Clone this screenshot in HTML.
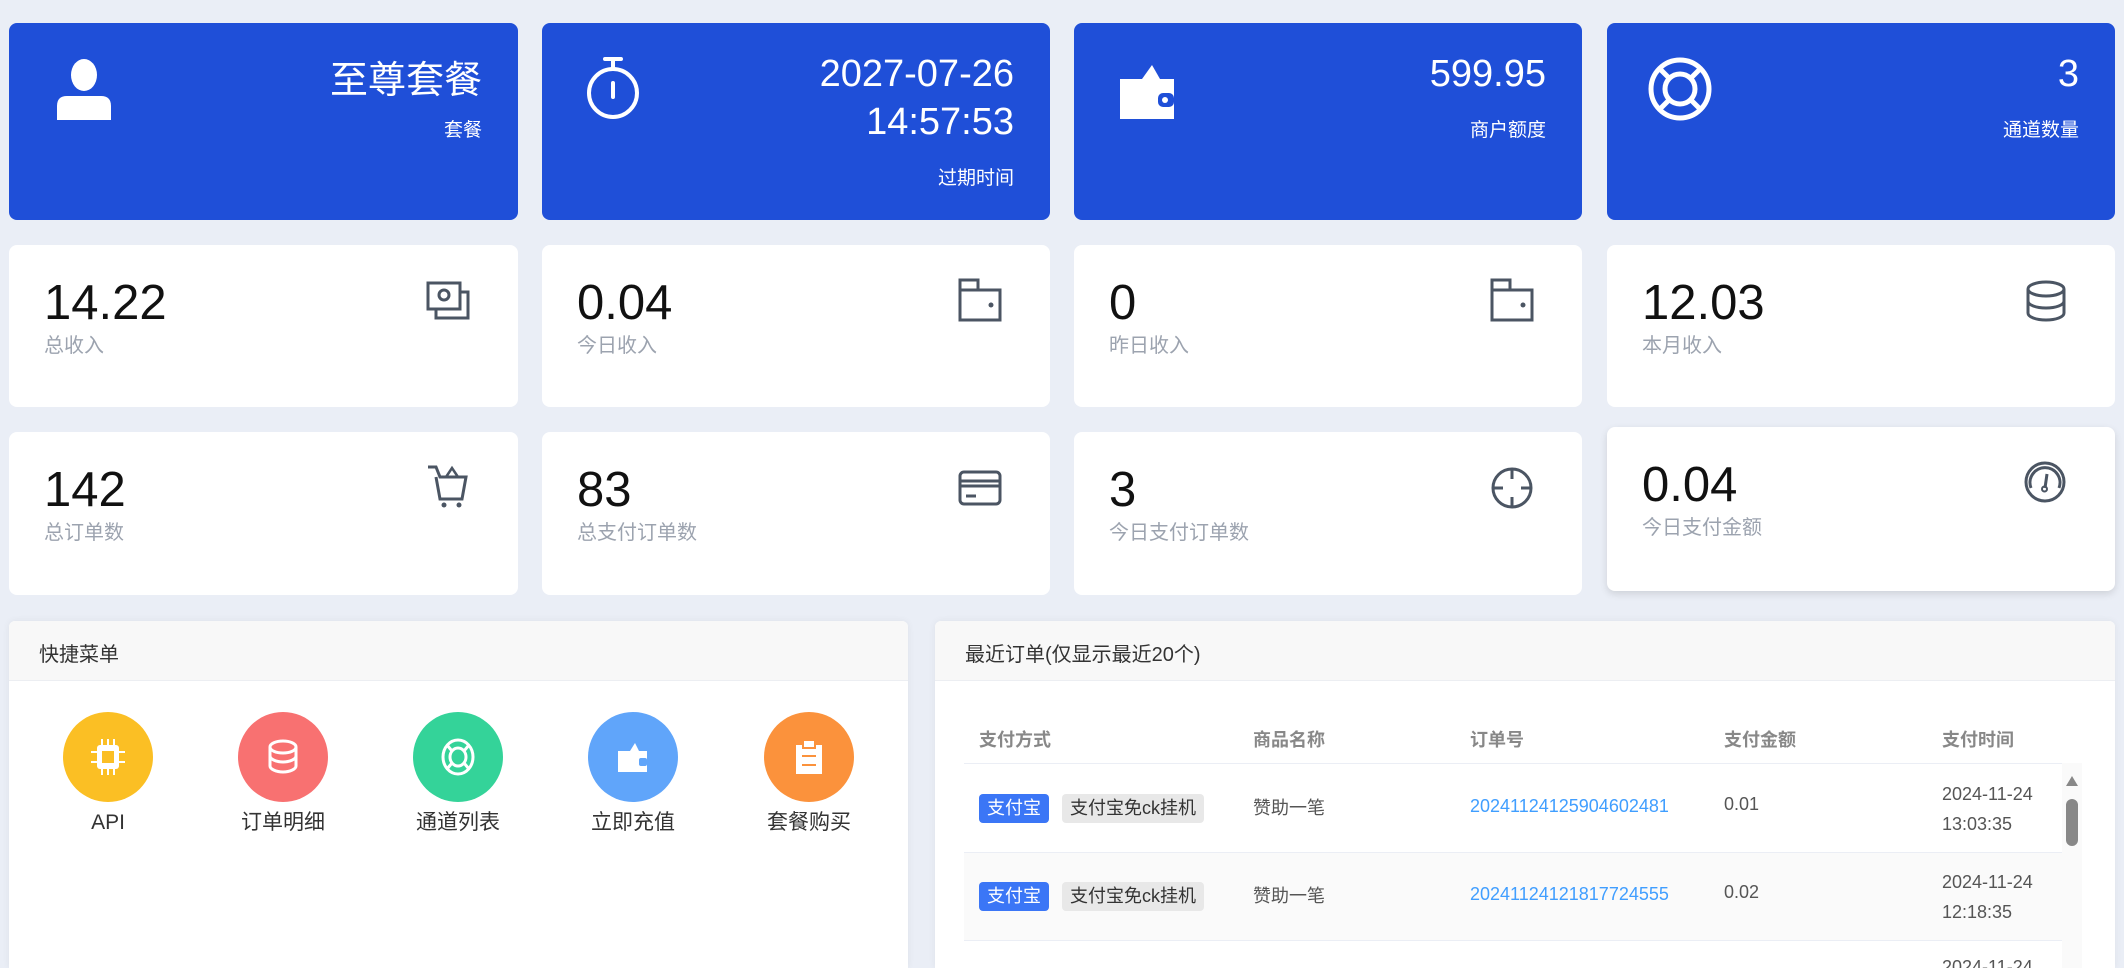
<!DOCTYPE html>
<html style="width:2124px;height:968px;overflow:hidden"><head><meta charset="utf-8"><style>
*{box-sizing:border-box;margin:0;padding:0}
body{width:2124px;height:968px;background:#eaeef6;font-family:"Liberation Sans","Noto Sans CJK SC",sans-serif;position:relative;overflow:hidden}
.c{position:absolute;border-radius:8px}
.b{background:#1f4fd8;color:#fff}
.w{background:#fff}
.r{position:absolute;right:36px;text-align:right;white-space:nowrap}
.num{position:absolute;left:35px;font-size:49px;color:#111;line-height:1}
.lab{position:absolute;left:35px;font-size:20px;color:#9ca3af}
.ic{position:absolute;right:48px}
.p{position:absolute;background:#fff;border-radius:6px 6px 0 0;box-shadow:0 0 8px rgba(0,0,0,.06);overflow:hidden}
.ph{height:60px;background:#f8f8f8;border-bottom:1px solid #eceef2;font-size:20px;color:#333;padding:17px 0 0 30px}
.m{position:absolute;top:712px;width:90px;text-align:center}
.m .o{width:90px;height:90px;border-radius:50%;display:flex;align-items:center;justify-content:center}
.m .t{position:absolute;top:96px;left:-30px;width:150px;text-align:center;font-size:21px;color:#333;line-height:30px;height:30px}
.th{position:absolute;top:726px;font-size:18px;color:#888;font-weight:bold}
.td{position:absolute;font-size:18px;color:#555;white-space:nowrap}
.bd{position:absolute;height:29px;border-radius:4px;font-size:18px;line-height:29px;padding:0 8px}
</style></head><body>

<!-- Row 1 -->
<div class="c b" style="left:9px;top:23px;width:509px;height:197px">
<svg style="position:absolute;left:44px;top:35px" width="62" height="62" viewBox="0 0 62 62"><ellipse cx="31" cy="17" rx="13" ry="16" fill="#fff"/><path d="M4 62V48q0-10 10-10h34q10 0 10 10v14z" fill="#fff"/></svg>
<div class="r" style="top:26px;font-size:38px">至尊套餐</div>
<div class="r" style="top:92px;font-size:19px">套餐</div>
</div>
<div class="c b" style="left:542px;top:23px;width:508px;height:197px">
<svg style="position:absolute;left:42px;top:33px" width="58" height="64" viewBox="0 0 58 64"><circle cx="29" cy="37" r="24" fill="none" stroke="#fff" stroke-width="4"/><path d="M21 3h16M29 3v10M29 27v14" stroke="#fff" stroke-width="4" fill="none" stroke-linecap="round"/></svg>
<div class="r" style="top:30px;font-size:38px">2027-07-26</div>
<div class="r" style="top:78px;font-size:38px">14:57:53</div>
<div class="r" style="top:140px;font-size:19px">过期时间</div>
</div>
<div class="c b" style="left:1074px;top:23px;width:508px;height:197px">
<svg style="position:absolute;left:44px;top:40px" width="58" height="56" viewBox="0 0 58 56"><path d="M24 16L34 2 42 16z" fill="#fff"/><path d="M2 16h54v40H2z" fill="#fff"/><rect x="40" y="30" width="16" height="14" rx="5" fill="#1f4fd8"/><circle cx="47" cy="37" r="3" fill="#fff"/></svg>
<div class="r" style="top:30px;font-size:38px">599.95</div>
<div class="r" style="top:92px;font-size:19px">商户额度</div>
</div>
<div class="c b" style="left:1607px;top:23px;width:508px;height:197px">
<svg style="position:absolute;left:40px;top:33px" width="66" height="66" viewBox="0 0 66 66"><circle cx="33" cy="33" r="29" fill="none" stroke="#fff" stroke-width="5"/><circle cx="33" cy="33" r="15" fill="none" stroke="#fff" stroke-width="5"/><path d="M13 13l9 9M53 13l-9 9M13 53l9-9M53 53l-9-9" stroke="#fff" stroke-width="5"/></svg>
<div class="r" style="top:30px;font-size:38px">3</div>
<div class="r" style="top:92px;font-size:19px">通道数量</div>
</div>

<!-- Row 2 -->
<div class="c w" style="left:9px;top:245px;width:509px;height:162px">
<div class="num" style="top:34px">14.22</div><div class="lab" style="top:84px">总收入</div>
<svg class="ic" style="top:36px" width="44" height="40" viewBox="0 0 44 40"><rect x="2" y="2" width="32" height="26" fill="none" stroke="#4b5563" stroke-width="3"/><path d="M10 28v9h32V11h-8" fill="none" stroke="#4b5563" stroke-width="3"/><circle cx="18" cy="14" r="5" fill="none" stroke="#4b5563" stroke-width="3"/></svg>
</div>
<div class="c w" style="left:542px;top:245px;width:508px;height:162px">
<div class="num" style="top:34px">0.04</div><div class="lab" style="top:84px">今日收入</div>
<svg class="ic" style="top:33px" width="44" height="44" viewBox="0 0 44 44"><path d="M2 2h18v10h22v30H2z" fill="none" stroke="#4b5563" stroke-width="3"/><path d="M2 12h18" stroke="#4b5563" stroke-width="3"/><circle cx="33" cy="27" r="2.5" fill="#4b5563"/></svg>
</div>
<div class="c w" style="left:1074px;top:245px;width:508px;height:162px">
<div class="num" style="top:34px">0</div><div class="lab" style="top:84px">昨日收入</div>
<svg class="ic" style="top:33px" width="44" height="44" viewBox="0 0 44 44"><path d="M2 2h18v10h22v30H2z" fill="none" stroke="#4b5563" stroke-width="3"/><path d="M2 12h18" stroke="#4b5563" stroke-width="3"/><circle cx="33" cy="27" r="2.5" fill="#4b5563"/></svg>
</div>
<div class="c w" style="left:1607px;top:245px;width:508px;height:162px">
<div class="num" style="top:34px">12.03</div><div class="lab" style="top:84px">本月收入</div>
<svg class="ic" style="top:35px" width="42" height="42" viewBox="0 0 42 42"><ellipse cx="21" cy="9" rx="18" ry="7" fill="none" stroke="#4b5563" stroke-width="3"/><path d="M3 9v12c0 4 8 7 18 7s18-3 18-7V9M3 21v12c0 4 8 7 18 7s18-3 18-7V21" fill="none" stroke="#4b5563" stroke-width="3"/></svg>
</div>

<!-- Row 3 -->
<div class="c w" style="left:9px;top:432px;width:509px;height:163px">
<div class="num" style="top:34px">142</div><div class="lab" style="top:84px">总订单数</div>
<svg class="ic" style="top:32px" width="44" height="44" viewBox="0 0 44 44"><path d="M2 3h8l4 10h26l-4 22H14L10 13" fill="none" stroke="#4b5563" stroke-width="3"/><path d="M20 13l6-9 6 9" fill="none" stroke="#4b5563" stroke-width="2.5"/><circle cx="18" cy="41" r="2.5" fill="#4b5563"/><circle cx="33" cy="41" r="2.5" fill="#4b5563"/></svg>
</div>
<div class="c w" style="left:542px;top:432px;width:508px;height:163px">
<div class="num" style="top:34px">83</div><div class="lab" style="top:84px">总支付订单数</div>
<svg class="ic" style="top:38px" width="44" height="36" viewBox="0 0 44 36"><rect x="2" y="2" width="40" height="32" rx="4" fill="none" stroke="#4b5563" stroke-width="3"/><path d="M2 11h40M2 16h40" stroke="#4b5563" stroke-width="3"/><path d="M8 26h10" stroke="#4b5563" stroke-width="3"/></svg>
</div>
<div class="c w" style="left:1074px;top:432px;width:508px;height:163px">
<div class="num" style="top:34px">3</div><div class="lab" style="top:84px">今日支付订单数</div>
<svg class="ic" style="top:34px" width="44" height="44" viewBox="0 0 44 44"><circle cx="22" cy="22" r="19" fill="none" stroke="#4b5563" stroke-width="3"/><path d="M22 3v10M22 31v10M3 22h10M31 22h10" stroke="#4b5563" stroke-width="3"/></svg>
</div>
<div class="c w" style="left:1607px;top:427px;width:508px;height:164px;box-shadow:0 3px 8px rgba(0,0,0,.12)">
<div class="num" style="top:34px">0.04</div><div class="lab" style="top:84px">今日支付金额</div>
<svg class="ic" style="top:33px" width="44" height="44" viewBox="0 0 44 44"><circle cx="22" cy="22" r="19" fill="none" stroke="#4b5563" stroke-width="3"/><path d="M8 28A15 15 0 1 1 36 28" fill="none" stroke="#4b5563" stroke-width="3"/><path d="M24 14l-2 14" stroke="#4b5563" stroke-width="3"/><circle cx="21.5" cy="29" r="2.5" fill="none" stroke="#4b5563" stroke-width="2"/></svg>
</div>

<!-- Quick menu -->
<div class="p" style="left:9px;top:621px;width:899px;height:347px">
<div class="ph">快捷菜单</div>
</div>
<div class="m" style="left:63px"><div class="o" style="background:#fbbf24"><svg width="34" height="40" viewBox="0 0 34 40"><rect x="6" y="8" width="22" height="24" rx="3" fill="#fff"/><path d="M11 2v6M17 2v6M23 2v6M11 32v6M17 32v6M23 32v6M0 15h6M0 25h6M28 15h6M28 25h6" stroke="#fff" stroke-width="2"/><rect x="11" y="14" width="12" height="12" fill="#fbbf24"/></svg></div><div class="t">API</div></div>
<div class="m" style="left:238px"><div class="o" style="background:#f87171"><svg width="32" height="36" viewBox="0 0 32 36"><ellipse cx="16" cy="8" rx="13" ry="6" fill="none" stroke="#fff" stroke-width="3"/><path d="M3 8v9c0 3 6 6 13 6s13-3 13-6V8M3 17v10c0 3 6 6 13 6s13-3 13-6V17" fill="none" stroke="#fff" stroke-width="3"/></svg></div><div class="t">订单明细</div></div>
<div class="m" style="left:413px"><div class="o" style="background:#34d399"><svg width="34" height="38" viewBox="0 0 34 38"><ellipse cx="17" cy="19" rx="15" ry="17" fill="none" stroke="#fff" stroke-width="3"/><ellipse cx="17" cy="19" rx="8" ry="9" fill="none" stroke="#fff" stroke-width="3"/><path d="M6 7l5 6M28 7l-5 6M6 31l5-6M28 31l-5-6" stroke="#fff" stroke-width="3"/></svg></div><div class="t">通道列表</div></div>
<div class="m" style="left:588px"><div class="o" style="background:#60a5fa"><svg width="30" height="30" viewBox="0 0 30 30"><path d="M12 9l5-8 4 8z" fill="#fff"/><path d="M0 9h29v21H0z" fill="#fff"/><rect x="21" y="16" width="8" height="8" rx="2" fill="#60a5fa"/></svg></div><div class="t">立即充值</div></div>
<div class="m" style="left:764px"><div class="o" style="background:#fb923c"><svg width="26" height="34" viewBox="0 0 26 34"><rect x="0" y="5" width="26" height="29" fill="#fff"/><rect x="7" y="0" width="12" height="8" fill="#fff" stroke="#fb923c" stroke-width="2"/><path d="M6 16h14M6 25h14" stroke="#fb923c" stroke-width="2"/></svg></div><div class="t">套餐购买</div></div>

<!-- Recent orders -->
<div class="p" style="left:935px;top:621px;width:1180px;height:347px">
<div class="ph">最近订单(仅显示最近20个)</div>
</div>
<div class="th" style="left:979px">支付方式</div>
<div class="th" style="left:1253px">商品名称</div>
<div class="th" style="left:1470px">订单号</div>
<div class="th" style="left:1724px">支付金额</div>
<div class="th" style="left:1942px">支付时间</div>
<div style="position:absolute;left:964px;top:763px;width:1098px;height:1px;background:#ebeef5"></div>
<div style="position:absolute;left:964px;top:852px;width:1098px;height:89px;background:#fafafa;border-top:1px solid #ebeef5;border-bottom:1px solid #ebeef5"></div>

<div class="bd" style="left:979px;top:794px;background:#3b76f6;color:#fff">支付宝</div>
<div class="bd" style="left:1062px;top:794px;background:#e8e8e8;color:#333">支付宝免ck挂机</div>
<div class="td" style="left:1253px;top:794px">赞助一笔</div>
<div class="td" style="left:1470px;top:796px;color:#409eff">20241124125904602481</div>
<div class="td" style="left:1724px;top:794px">0.01</div>
<div class="td" style="left:1942px;top:779px;line-height:30px">2024-11-24<br>13:03:35</div>

<div class="bd" style="left:979px;top:882px;background:#3b76f6;color:#fff">支付宝</div>
<div class="bd" style="left:1062px;top:882px;background:#e8e8e8;color:#333">支付宝免ck挂机</div>
<div class="td" style="left:1253px;top:882px">赞助一笔</div>
<div class="td" style="left:1470px;top:884px;color:#409eff">20241124121817724555</div>
<div class="td" style="left:1724px;top:882px">0.02</div>
<div class="td" style="left:1942px;top:867px;line-height:30px">2024-11-24<br>12:18:35</div>

<div class="td" style="left:1942px;top:952px;line-height:30px">2024-11-24</div>

<div style="position:absolute;left:2062px;top:763px;width:20px;height:205px;background:#fafafa"></div>
<svg style="position:absolute;left:2065px;top:775px" width="14" height="12" viewBox="0 0 14 12"><path d="M7 1l6 10H1z" fill="#888"/></svg>
<div style="position:absolute;left:2066px;top:799px;width:12px;height:47px;border-radius:6px;background:#888"></div>
</body></html>
